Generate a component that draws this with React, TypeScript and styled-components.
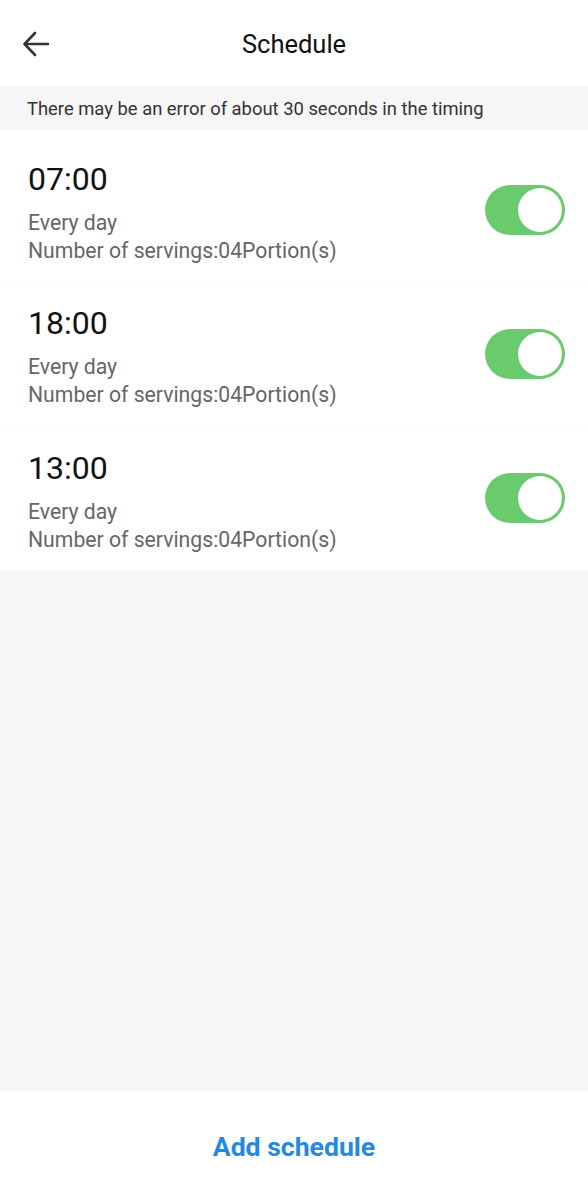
import styled, { createGlobalStyle } from 'styled-components';

const GlobalStyle = createGlobalStyle`
  body {
    margin: 0;
    font-family: Roboto, "Noto Sans", sans-serif;
    background: #f6f6f6;
  }
`;

const Page = styled.div`
  display: flex;
  flex-direction: column;
  height: 1200px;
  background: #f6f6f6;
`;

const Header = styled.header`
  display: flex;
  align-items: center;
  justify-content: center;
  position: relative;
  height: 86px;
  background: #fff;
`;

const BackButton = styled.button`
  position: absolute;
  left: 18px;
  top: 26px;
  width: 36px;
  height: 36px;
  padding: 0;
  border: none;
  background: none;
  display: flex;
  align-items: center;
  justify-content: center;
`;

const Title = styled.h1`
  margin: 0;
  font-size: 25.5px;
  font-weight: 400;
  color: #111;
  padding-top: 2px;
`;

const Notice = styled.div`
  height: 44px;
  display: flex;
  align-items: center;
  padding: 0 27px;
  font-size: 18.4px;
  color: #333;
  background: #f6f6f6;
`;

const List = styled.div`
  background: #fff;
  padding-top: 9px;
`;

const Row = styled.div<{ $last?: boolean }>`
  display: flex;
  align-items: center;
  justify-content: space-between;
  height: 144px;
  padding: 0 23px 0 28px;
  box-sizing: border-box;
  border-bottom: ${(p) => (p.$last ? 'none' : '1px solid #fafafa')};
`;

const Info = styled.div`
  display: flex;
  flex-direction: column;
  padding-top: 4px;
`;

const Time = styled.div`
  font-size: 32px;
  color: #111;
  line-height: 38px;
  margin-bottom: 11px;
`;

const Detail = styled.div`
  font-size: 21.2px;
  color: #666;
  line-height: 28px;
`;

const Toggle = styled.div`
  width: 80px;
  height: 50px;
  border-radius: 25px;
  background: #6acb6e;
  position: relative;
  margin-top: -2px;
`;

const Knob = styled.div`
  position: absolute;
  right: 3px;
  top: 3px;
  width: 44px;
  height: 44px;
  border-radius: 50%;
  background: #fff;
`;

const Spacer = styled.div`
  flex: 1;
`;

const Footer = styled.div`
  height: 109px;
  background: #fff;
  display: flex;
  align-items: center;
  justify-content: center;
`;

const AddButton = styled.button`
  border: none;
  background: none;
  font-family: Roboto, "Noto Sans", sans-serif;
  font-size: 26.6px;
  font-weight: 700;
  color: #2389e2;
  padding: 0;
  margin-top: 2px;
`;

const schedules = ['07:00', '18:00', '13:00'];

export default function App() {
  return (
    <Page>
      <GlobalStyle />
      <Header>
        <BackButton aria-label="Back">
          <svg width="28" height="28" viewBox="0 0 28 28" fill="none">
            <path d="M26 14H3M13 3L2.5 14L13 25" stroke="#333" strokeWidth="2.6" strokeLinecap="round" strokeLinejoin="round" />
          </svg>
        </BackButton>
        <Title>Schedule</Title>
      </Header>
      <Notice>There may be an error of about 30 seconds in the timing</Notice>
      <List>
        {schedules.map((t, i) => (
          <Row key={t} $last={i === schedules.length - 1}>
            <Info>
              <Time>{t}</Time>
              <Detail>Every day</Detail>
              <Detail>Number of servings:04Portion(s)</Detail>
            </Info>
            <Toggle>
              <Knob />
            </Toggle>
          </Row>
        ))}
      </List>
      <Spacer />
      <Footer>
        <AddButton>Add schedule</AddButton>
      </Footer>
    </Page>
  );
}
